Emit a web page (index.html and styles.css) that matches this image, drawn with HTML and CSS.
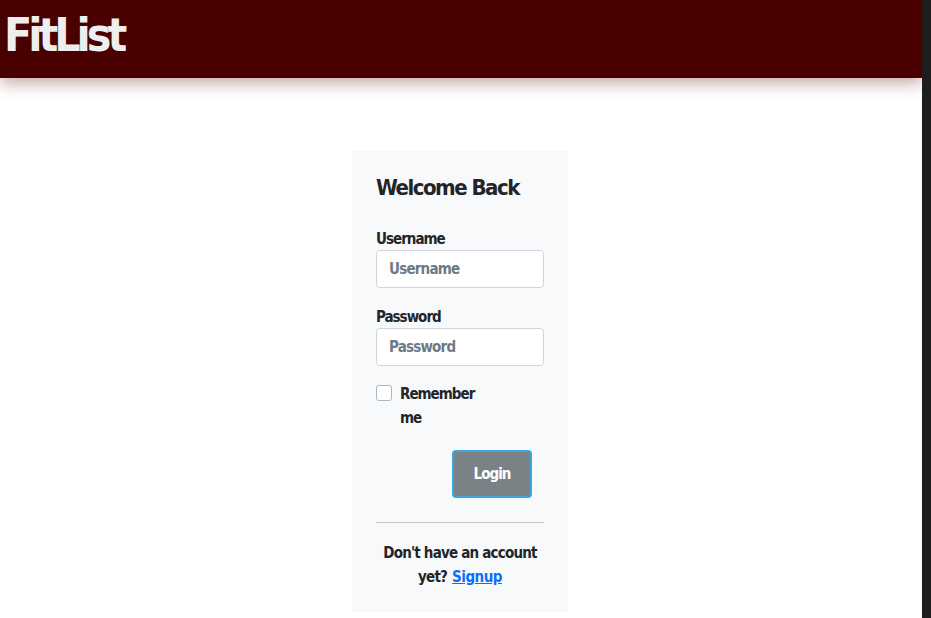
FILE: index.html
```html
<!DOCTYPE html>
<html lang="en">
<head>
<meta charset="utf-8">
<title>FitList</title>
<link rel="stylesheet" href="styles.css">
</head>
<body>
<div class="app">
  <div class="page">
    <header class="topbar">
      <h1 class="brand">FitList</h1>
    </header>
    <main class="main">
      <form class="card">
        <h2 class="title">Welcome Back</h2>
        <div class="field">
          <label class="label" for="u">Username</label>
          <input class="input" id="u" type="text" placeholder="Username">
        </div>
        <div class="field field-last">
          <label class="label" for="p">Password</label>
          <input class="input" id="p" type="password" placeholder="Password">
        </div>
        <div class="check-row">
          <span class="checkbox"></span>
          <span class="check-label">Remember me</span>
        </div>
        <div class="actions">
          <button class="btn" type="button">Login</button>
        </div>
        <hr class="rule">
        <div class="foot">
          <span class="foot-line">Don't have an account</span>
          <span class="foot-line">yet?<a class="link" href="#">Signup</a></span>
        </div>
      </form>
    </main>
  </div>
  <aside class="devtools"></aside>
</div>
</body>
</html>
```
FILE: styles.css
```css
html, body { margin: 0; padding: 0; }
body {
  font-family: "DejaVu Sans Condensed", "DejaVu Sans", sans-serif;
  font-weight: 700;
  color: #212529;
  background: #fff;
}
.app { display: flex; height: 618px; overflow: hidden; }
.page { flex: 1; min-width: 0; }
.devtools { width: 9px; background: #1e1e1e; }
.topbar {
  height: 78px;
  background: #480000;
  box-shadow: 0 6px 14px rgba(110, 20, 20, 0.35);
  padding: 0 4px;
}
.brand {
  margin: 0;
  font-size: 46px;
  line-height: 70px;
  color: #eeeeee;
  letter-spacing: -4px;
}
.main { display: flex; justify-content: center; padding: 73px 2px 0 0; }
.card {
  width: 168px;
  background: #f8f9fa;
  padding: 24px 24px 23px;
}
.title { margin: 0 0 27px; font-size: 22px; line-height: 26px; letter-spacing: -1.5px; }
.field { margin-bottom: 18px; }
.field-last { margin-bottom: 16px; }
.label { display: block; font-size: 15px; line-height: 22px; letter-spacing: -1px; }
.input {
  box-sizing: border-box;
  width: 168px;
  height: 38px;
  border: 1px solid #ced4da;
  border-radius: 4px;
  background: #fff;
  padding: 0 12px;
  font: inherit;
  font-size: 15px;
  letter-spacing: -0.8px;
  color: #212529;
}
.input::placeholder { color: #6c7a85; }
.check-row { display: flex; align-items: flex-start; gap: 8px; }
.checkbox {
  width: 14px; height: 14px; margin-top: 3px;
  border: 1px solid #adb5bd; border-radius: 3px; background: #fff; flex: none;
}
.check-label { width: 76px; font-size: 15px; line-height: 24px; letter-spacing: -1px; }
.actions { display: flex; justify-content: flex-end; padding: 20px 12px 0 0; }
.btn {
  width: 80px; height: 48px;
  background: #7a8286;
  border: 2px solid #3aa6e0;
  border-radius: 4px;
  color: #fff;
  font: inherit;
  font-size: 15px;
  letter-spacing: -1px;
}
.rule { margin: 24px 0 18px; border: 0; border-top: 1px solid #c4c4c4; }
.foot { display: flex; flex-direction: column; align-items: center; font-size: 15px; line-height: 24px; letter-spacing: -0.8px; }
.foot-line { display: flex; gap: 5px; }
.link { color: #0d6efd; letter-spacing: -0.5px; }
```
